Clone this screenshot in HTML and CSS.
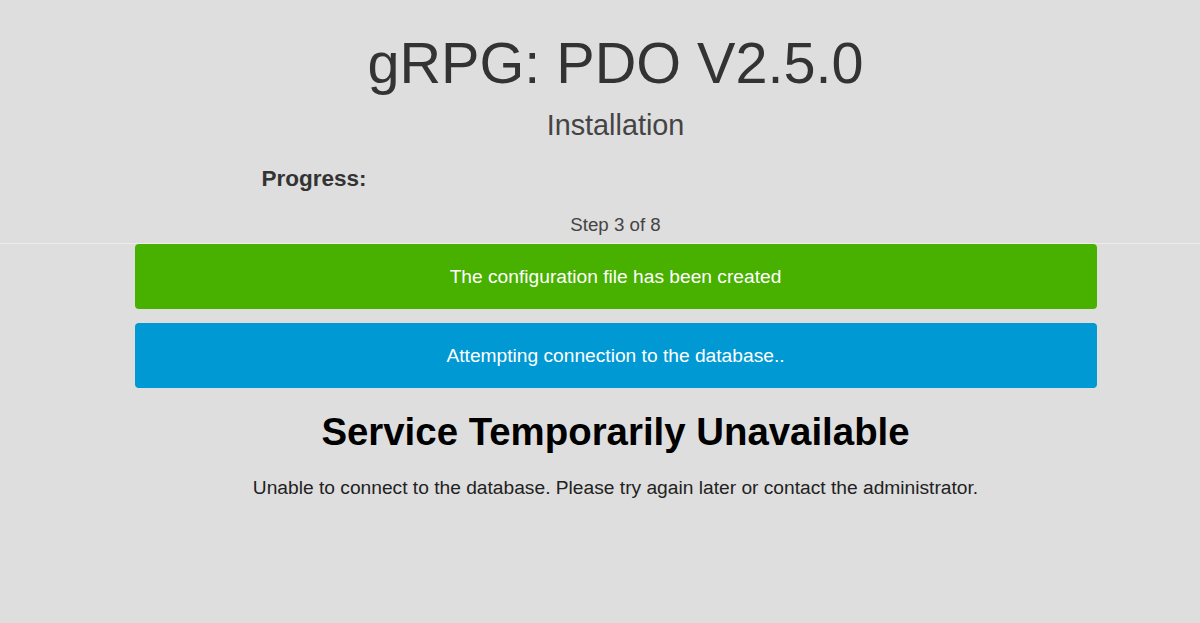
FILE: index.html
```html
<!DOCTYPE html>
<html lang="en">
  <head>
    <meta charset="UTF-8" />
    <meta name="viewport" content="width=device-width, initial-scale=1.0" />
    <title>gRPG: PDO V2.5.0 - Installation</title>
    <link rel="stylesheet" href="styles.css">
  </head>
  <body>
    <div class="page">
      <h1 class="title">gRPG: PDO V2.5.0</h1>
      <h2 class="subtitle">Installation</h2>
      <div class="container">
        <h3 class="progress-label">Progress:</h3>
        <div class="step">Step 3 of 8</div>
      </div>
    </div>
    <hr class="divider" />
    <div class="page">
      <div class="container">
        <div class="alert alert-success">The configuration file has been created</div>
        <div class="alert alert-info">Attempting connection to the database..</div>
      </div>
      <h1 class="error-title">Service Temporarily Unavailable</h1>
      <p class="error-text">Unable to connect to the database. Please try again later or contact the administrator.</p>
    </div>
  </body>
</html>
```

FILE: styles.css
```css
* {
  margin: 0;
  padding: 0;
  box-sizing: border-box;
}
body {
  font-family: "Liberation Sans", Arial, sans-serif;
  background-color: #dedede;
  color: #333;
}
.page {
  padding-left: 31px;
  text-align: center;
}
.container {
  width: 962px;
  margin: 0 auto;
}
.title {
  font-size: 57.6px;
  font-weight: normal;
  line-height: 66px;
  margin-top: 30px;
  color: #333;
}
.subtitle {
  font-size: 28.8px;
  font-weight: normal;
  line-height: 33px;
  margin-top: 13px;
  color: #444;
}
.progress-label {
  font-size: 22.5px;
  line-height: 26px;
  margin-top: 24px;
  padding-left: 127px;
  text-align: left;
  color: #333;
}
.step {
  font-size: 18.7px;
  line-height: 22px;
  margin-top: 22px;
  color: #444;
}
.divider {
  border: none;
  border-top: 1px solid #ececec;
  margin-top: 7px;
}
.alert {
  height: 65px;
  line-height: 65px;
  font-size: 19.2px;
  color: #fff;
  border-radius: 4px;
  margin-bottom: 14px;
}
.alert-success {
  background-color: #48b100;
}
.alert-info {
  background-color: #0099d3;
}
.error-title {
  font-size: 38.4px;
  line-height: 44px;
  margin-top: 22px;
  color: #000;
}
.error-text {
  font-size: 19.2px;
  line-height: 22px;
  margin-top: 23px;
  color: #222;
}
```
